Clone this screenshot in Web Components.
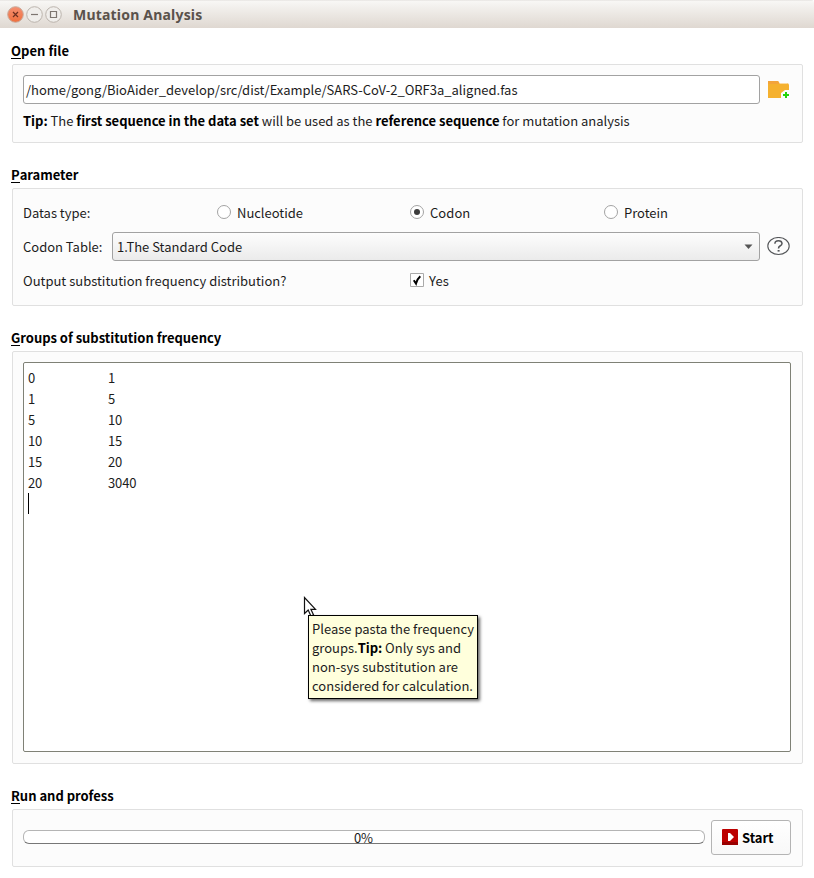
<!DOCTYPE html>
<html lang="en"><head><meta charset="utf-8"><title>Mutation Analysis</title>
<style>
html,body{margin:0;width:814px;height:878px;overflow:hidden;background:#fff}
body{font:13px/20px "Noto Sans CJK SC","Noto Sans",sans-serif;color:#1c1c1c}
</style></head><body><mutation-window></mutation-window>
<script>
const define=(name,html,ready)=>customElements.define(name,class extends HTMLElement{
  connectedCallback(){
    if(this.shadowRoot)return;
    this.attachShadow({mode:'open'}).innerHTML=html;
    if(ready)ready(this,this.shadowRoot);
  }
});

/* One line of text whose tracking is set so that it takes a given width. */
define('fit-text',`<style>:host{display:inline-block;white-space:pre;line-height:20px;justify-self:start}::slotted(b){color:#000}</style><slot></slot>`,el=>{
  const want=+el.getAttribute('w'),n=el.textContent.length;
  if(!want||!n)return;
  const have=el.getBoundingClientRect().width;
  el.style.letterSpacing=((want-have)/n).toFixed(4)+'px';
});

define('title-bar',`<style>
:host{display:flex;align-items:center;height:28px;box-sizing:border-box;padding:1px 0 0 7px;background:linear-gradient(#dfdcd9 0,#f8f7f5 1px,#f3f1ee 6px,#dfd8d1 100%);border-radius:0 3px 0 0;color:#5a524b;font:700 14px "Noto Sans",sans-serif}
svg{display:block;margin-right:2px}fit-text{margin-left:9px}</style>
<svg width="17" height="17"><defs><linearGradient id="g" x2="0" y2="1"><stop stop-color="#f59072"/><stop offset="1" stop-color="#ef6f3d"/></linearGradient></defs><circle cx="8.5" cy="8.5" r="7.8" fill="url(#g)" stroke="#c9aa9b"/><path d="M6 6l5 5M11 6l-5 5" stroke="#6d2f20" stroke-width="1.2"/></svg>
<svg width="17" height="17"><circle cx="8.5" cy="8.5" r="7.8" fill="#f0eeeb" stroke="#bbb4ad"/><path d="M5 8.5h7" stroke="#7d7670" stroke-width="1.2"/></svg>
<svg width="17" height="17"><circle cx="8.5" cy="8.5" r="7.8" fill="#f0eeeb" stroke="#bbb4ad"/><path d="M5.5 5.5h6v6h-6z" fill="none" stroke="#7d7670" stroke-width="1.2"/></svg>
<fit-text w="129.5">Mutation Analysis</fit-text>`);

define('group-box',`<style>
:host{display:flex;flex-direction:column;padding:0 11px 0 12px}
.h{display:flex;box-sizing:border-box;height:25px;padding-top:2px;margin:0 0 0 -1px;font-weight:700;color:#000;align-items:flex-start}
.p{box-sizing:border-box;border:1px solid #e0e0e0;border-radius:2px;background:#fcfcfc;padding:10px 11px 10px 10px}
</style><div class="h"></div><div class="p"><slot></slot></div>`,(el,r)=>{
  const t=el.getAttribute('label');
  const f=document.createElement('fit-text');f.setAttribute('w',el.getAttribute('w'));
  f.innerHTML='<span style="display:inline-block;height:17px;border-bottom:1px solid #000;vertical-align:top"></span><span></span>';
  f.firstChild.textContent=t[0];f.lastChild.textContent=t.slice(1);
  r.querySelector('.h').append(f);
  r.querySelector('.p').style.height=el.getAttribute('h')+'px';
});

define('path-field',`<style>:host{display:block;box-sizing:border-box;width:737px;height:29px;border:1px solid #a2a2a2;border-radius:3px;background:#fff;padding:4px 2px}</style><slot></slot>`);
define('folder-icon',`<style>:host{display:block;width:22px;height:18px}svg{display:block}</style>
<svg width="22" height="18"><path d="M0 0h10l1.500 2H19q2 .5 2 2v5H17L13 12v5H0z" fill="#f5b12f"/><path d="M0 0h10l1.500 3H0z" fill="#f3a43b"/><path d="M11 2h8l1 1h-8z" fill="#fbd9a0"/><path d="M18 11v6M15 14h6" stroke="#25d40c" stroke-width="2"/></svg>`);
define('help-icon',`<style>:host{display:block;width:24px;height:20px}svg{display:block}</style>
<svg width="24" height="20" fill="none" stroke="#55575a"><ellipse cx="11.500" cy="9" rx="10.700" ry="8.500" stroke-width="1.100"/><path d="M7.900 6.700Q8 3.700 11.400 3.700T15 6.400Q15 7.900 13 9Q11.500 9.900 11.500 11.500" stroke-width="1.500"/><path d="M10.600 13.800h2" stroke-width="1.600"/></svg>`);
define('radio-option',`<style>:host{display:flex;align-items:center;height:20px}i{box-sizing:border-box;width:14px;height:14px;border:1px solid #a3a3a3;border-radius:50%;background:#fff;margin:0 6px 2px 0;display:grid;place-items:center}
:host([checked]) i:after{content:"";width:6px;height:6px;border-radius:50%;background:#3b3b3b}</style><i></i><slot></slot>`);
define('check-option',`<style>:host{display:flex;align-items:center;height:20px}svg{margin:0 5px 2px 0}</style><svg width="14" height="14"><path d="M.5.5h13v13H.5z" fill="#fff" stroke="#aaa"/><path d="M3.800 7.200L6 10.600Q7.200 6 10.300 3.300" fill="none" stroke="#000" stroke-width="2"/></svg><slot></slot>`);
define('select-box',`<style>:host{display:flex;justify-content:space-between;align-items:center;box-sizing:border-box;width:648px;height:29px;border:1px solid #a2a2a2;border-radius:3px;background:linear-gradient(#fdfdfd,#ebebeb);padding:0 6px 0 4px}</style><slot></slot><svg width="9" height="6"><path d="M.5.500h8L4.500 5z" fill="#555"/></svg>`);
define('group-editor',`<style>:host{display:grid;grid-template-columns:80px 1fr;grid-auto-rows:21px;align-content:start;box-sizing:border-box;height:390px;border:1px solid #7f8176;border-radius:2px;background:#fff;padding:5px 4px;line-height:21px}i{width:1px;height:21px;background:#000;margin-top:-1px}</style>`+
 [[0,1],[1,5],[5,10],[10,15],[15,20],[20,3040]].map(r=>r.map(v=>`<fit-text w="${String(v).length*7.1}">${v}</fit-text>`).join('')).join('')+`<i></i>`);
define('tool-tip',`<style>:host{position:absolute;left:308px;top:615px;box-sizing:border-box;width:170px;height:84px;padding:3px 3px;background:#ffffdc;border:1px solid #000;box-shadow:2px 2px 3px #0009}
fit-text{display:block;width:max-content;line-height:19px;height:19px}</style>
<fit-text w="162">Please pasta the frequency</fit-text><fit-text w="149">groups.<b>Tip:</b> Only sys and</fit-text><fit-text w="146">non-sys substitution are</fit-text><fit-text w="161">considered for calculation.</fit-text>`);
define('mouse-pointer',`<style>:host{position:absolute;left:303px;top:596px;z-index:1}svg{display:block}</style><svg width="15" height="19"><path d="M1.500 1.500v16l3.700-3.500 2.700 6 2.600-1.200-2.600-5.500h4.600z" fill="#fff" stroke="#111" stroke-width="1.200"/></svg>`);
define('progress-line',`<style>:host{display:flex;justify-content:center;align-items:center;box-sizing:border-box;width:682px;height:14px;border:1px solid #b5b5b5;border-bottom-color:#777;border-radius:6px;background:#fff}
fit-text{flex:none;line-height:20px;margin:2px 1px 0 0}</style><fit-text w="19">0%</fit-text>`);
define('start-button',`<style>:host{display:flex;align-items:center;box-sizing:border-box;width:80px;height:35px;border:1px solid #b4b4b4;border-radius:3px;background:linear-gradient(#fff,#f8f8f8);padding-left:10px;font-weight:700;color:#000}svg{margin:0 4px 1px 0}</style><svg width="16" height="16"><rect width="16" height="16" rx="1" fill="#bc0000"/><path d="M0 13h16v3H0z" fill="#990000"/><path d="M6 4h2l4 4-4 4H6z" fill="#fff"/></svg><fit-text w="31.500">Start</fit-text>`);

define('mutation-window',`<style>
:host{display:block;position:relative;width:814px;height:878px;background:#fff}
main{display:flex;flex-direction:column;gap:20px;padding-top:11px}
.row{display:flex;align-items:center}.file{gap:8px}.tip{height:20px;margin-top:7px}
.types{display:grid;grid-template-columns:194px 193px 194px 1fr;height:20px;margin-top:4px}
.table{margin-top:9px;height:29px}.table select-box{margin-left:auto}.table help-icon{margin:0 0 0 7px}
.table{width:768px}
.out{display:grid;grid-template-columns:387px 1fr;height:20px;margin-top:10px}
.run{gap:6px}progress-line{margin-top:-1px}
</style>
<title-bar></title-bar>
<main>
<group-box label="Open file" w="58" h="79">
 <div class="row file"><path-field><fit-text w="491.5">/home/gong/BioAider_develop/src/dist/Example/SARS-CoV-2_ORF3a_aligned.fas</fit-text></path-field><folder-icon></folder-icon></div>
 <div class="tip"><fit-text w="606.7"><b>Tip:</b> The <b>first sequence in the data set</b> will be used as the <b>reference sequence</b> for mutation analysis</fit-text></div>
</group-box>
<group-box label="Parameter" w="67.5" h="118">
 <div class="types"><fit-text w="67.3">Datas type:</fit-text><radio-option><fit-text w="66">Nucleotide</fit-text></radio-option><radio-option checked><fit-text w="40.3">Codon</fit-text></radio-option><radio-option><fit-text w="44">Protein</fit-text></radio-option></div>
 <div class="row table"><fit-text w="79.4">Codon Table:</fit-text><select-box><fit-text w="125.2">1.The Standard Code</fit-text></select-box><help-icon></help-icon></div>
 <div class="out"><fit-text w="263.3">Output substitution frequency distribution?</fit-text><check-option><fit-text w="20">Yes</fit-text></check-option></div>
</group-box>
<group-box label="Groups of substitution frequency" w="210.3" h="413"><group-editor></group-editor></group-box>
<group-box label="Run and profess" w="102.7" h="58"><div class="row run"><progress-line></progress-line><start-button></start-button></div></group-box>
</main>
<tool-tip></tool-tip><mouse-pointer></mouse-pointer>`);
</script></body></html>
